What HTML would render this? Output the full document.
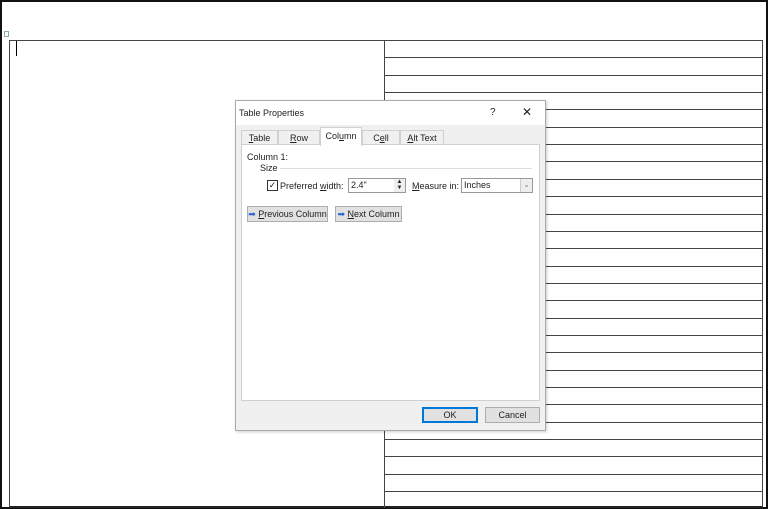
<!DOCTYPE html><html><head><style>
*{margin:0;padding:0;box-sizing:border-box}
body{width:768px;height:509px;background:#fff;position:relative;overflow:hidden;font-family:"Liberation Sans",sans-serif;font-size:9px;color:#222}
.a{position:absolute}
.hl{position:absolute;left:385px;width:377px;height:1px;background:#444}
.btn{position:absolute;background:#e1e1e1;border:1px solid #adadad;font-size:9px;text-align:center;line-height:14px}
</style></head><body>
<div class="a" style="left:0;top:0;width:768px;height:509px;border:2px solid #111"></div>
<div class="a" style="left:9px;top:40px;width:754px;height:468px;border:1px solid #444;border-bottom:2px solid #222"></div>
<div class="a" style="left:384px;top:40px;width:1px;height:468px;background:#444"></div>
<div class="a" style="left:16px;top:41px;width:1px;height:15px;background:#000"></div>
<div class="a" style="left:4px;top:31px;width:5px;height:6px;border:1px solid #8aa;"></div>
<div id="lines"></div>
<script>
var h='';for(var i=1;i<27;i++){h+='<div class="hl" style="top:'+Math.round(40+i*17.35)+'px"></div>'}
document.getElementById('lines').innerHTML=h;
</script>
<div class="a" style="left:235px;top:100px;width:311px;height:331px;background:#f0f0f0;border:1px solid #aaa;box-shadow:1px 1px 3px rgba(0,0,0,.2)">
<div class="a" style="left:0;top:0;width:309px;height:24px;background:#fff"></div>
<div class="a" style="left:3px;top:7px;font-size:9px">Table Properties</div>
<div class="a" style="left:254px;top:6px;font-size:10px">?</div>
<div class="a" style="left:286px;top:4px;font-size:12px">✕</div>
<div class="a" style="left:5px;top:43px;width:299px;height:257px;background:#fff;border:1px solid #d0d0d0"></div>
<div class="a" style="left:5px;top:29px;width:37px;height:15px;border:1px solid #d0d0d0;border-bottom:none;text-align:center;line-height:14px"><u>T</u>able</div>
<div class="a" style="left:42px;top:29px;width:42px;height:15px;border:1px solid #d0d0d0;border-bottom:none;text-align:center;line-height:14px"><u>R</u>ow</div>
<div class="a" style="left:84px;top:26px;width:42px;height:19px;background:#fff;border:1px solid #d0d0d0;border-bottom:none;text-align:center;line-height:17px">Col<u>u</u>mn</div>
<div class="a" style="left:126px;top:29px;width:38px;height:15px;border:1px solid #d0d0d0;border-bottom:none;text-align:center;line-height:14px">C<u>e</u>ll</div>
<div class="a" style="left:164px;top:29px;width:44px;height:15px;border:1px solid #d0d0d0;border-bottom:none;text-align:center;line-height:14px"><u>A</u>lt Text</div>
<div class="a" style="left:11px;top:51px">Column 1:</div>
<div class="a" style="left:24px;top:62px">Size</div>
<div class="a" style="left:44px;top:67px;width:252px;height:1px;background:#ddd"></div>
<div class="a" style="left:31px;top:79px;width:11px;height:11px;border:1px solid #333;font-size:9px;line-height:9px;text-align:center">✓</div>
<div class="a" style="left:44px;top:80px">Preferred <u>w</u>idth:</div>
<div class="a" style="left:112px;top:77px;width:58px;height:15px;background:#fff;border:1px solid #999;padding-left:2px;line-height:13px">2.4"</div>
<div class="a" style="left:158px;top:78px;width:11px;height:13px;background:#eee;font-size:6px;line-height:6px;text-align:center">▲<br>▼</div>
<div class="a" style="left:176px;top:80px"><u>M</u>easure in:</div>
<div class="a" style="left:225px;top:77px;width:72px;height:15px;background:#fff;border:1px solid #999;padding-left:2px;line-height:13px">Inches</div>
<div class="a" style="left:284px;top:78px;width:12px;height:13px;background:#eee;border-left:1px solid #ccc;font-size:7px;line-height:13px;text-align:center;color:#666">⌄</div>
<div class="btn" style="left:11px;top:105px;width:81px;height:16px"><span style="color:#36c">➡</span> <u>P</u>revious Column</div>
<div class="btn" style="left:99px;top:105px;width:67px;height:16px"><span style="color:#36c">➡</span> <u>N</u>ext Column</div>
<div class="btn" style="left:186px;top:306px;width:56px;height:16px;border:1px solid #0078d7;box-shadow:inset 0 0 0 1px #0078d7">OK</div>
<div class="btn" style="left:249px;top:306px;width:55px;height:16px">Cancel</div>
</div>
</body></html>
